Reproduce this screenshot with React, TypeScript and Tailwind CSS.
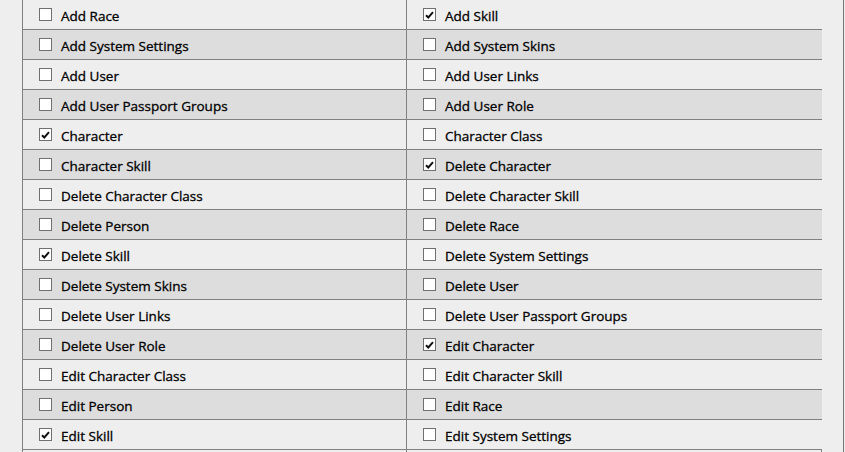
import { Fragment } from "react";

type Perm = { name: string; on: boolean };

const rows: [Perm, Perm][] = [
  [{ name: "Add Race", on: false }, { name: "Add Skill", on: true }],
  [{ name: "Add System Settings", on: false }, { name: "Add System Skins", on: false }],
  [{ name: "Add User", on: false }, { name: "Add User Links", on: false }],
  [{ name: "Add User Passport Groups", on: false }, { name: "Add User Role", on: false }],
  [{ name: "Character", on: true }, { name: "Character Class", on: false }],
  [{ name: "Character Skill", on: false }, { name: "Delete Character", on: true }],
  [{ name: "Delete Character Class", on: false }, { name: "Delete Character Skill", on: false }],
  [{ name: "Delete Person", on: false }, { name: "Delete Race", on: false }],
  [{ name: "Delete Skill", on: true }, { name: "Delete System Settings", on: false }],
  [{ name: "Delete System Skins", on: false }, { name: "Delete User", on: false }],
  [{ name: "Delete User Links", on: false }, { name: "Delete User Passport Groups", on: false }],
  [{ name: "Delete User Role", on: false }, { name: "Edit Character", on: true }],
  [{ name: "Edit Character Class", on: false }, { name: "Edit Character Skill", on: false }],
  [{ name: "Edit Person", on: false }, { name: "Edit Race", on: false }],
  [{ name: "Edit Skill", on: true }, { name: "Edit System Settings", on: false }],
];

function Box({ on }: { on: boolean }) {
  return (
    <span className="flex h-[13px] w-[13px] shrink-0 items-center justify-center border border-[#707070] bg-white">
      {on && (
        <svg width="9" height="8" viewBox="0 0 9 8">
          <path d="M1 4.2 L3.3 6.5 L8 1.2" fill="none" stroke="#111" strokeWidth="2" />
        </svg>
      )}
    </span>
  );
}

function Cell({ perm, last }: { perm: Perm; last?: boolean }) {
  return (
    <label className={`flex h-[29px] items-center gap-[9px] pl-4 ${last ? "" : "border-r border-[#808080]"}`}>
      <Box on={perm.on} />
      <span className="pt-[3px]">{perm.name}</span>
    </label>
  );
}

export default function App() {
  return (
    <div className="h-[452px] w-[845px] overflow-hidden bg-[#eeeeee] text-[13.5px] text-black [-webkit-text-stroke:0.3px_black]" style={{ fontFamily: '"Open Sans", sans-serif' }}>
      <div className="flex h-full w-[844px] border-r border-[#777] pl-[22px] pr-[21px]">
        <div className="grid h-fit w-[800px] grid-cols-[384px_415px] border-x border-[#808080]">
          {rows.map(([a, b], i) => (
            <Fragment key={a.name}>
              <div className={`border-b border-[#808080] ${i % 2 ? "bg-[#dddddd]" : "bg-[#eeeeee]"}`}>
                <Cell perm={a} />
              </div>
              <div className={`border-b border-[#808080] ${i % 2 ? "bg-[#dddddd]" : "bg-[#eeeeee]"}`}>
                <Cell perm={b} last />
              </div>
            </Fragment>
          ))}
          <div className="h-[29px] border-r border-[#808080]" />
          <div className="h-[29px]" />
        </div>
      </div>
    </div>
  );
}
